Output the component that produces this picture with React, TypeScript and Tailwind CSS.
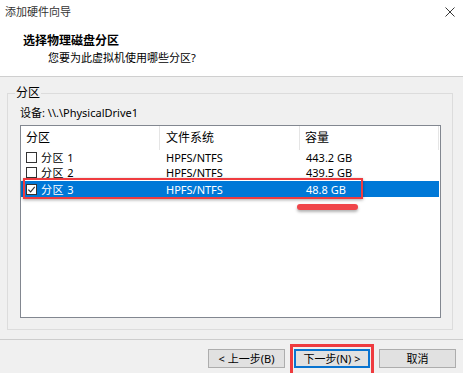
const rows = [
  { name: '分区 1', fs: 'HPFS/NTFS', size: '443.2 GB', checked: false, selected: false },
  { name: '分区 2', fs: 'HPFS/NTFS', size: '439.5 GB', checked: false, selected: false },
  { name: '分区 3', fs: 'HPFS/NTFS', size: '48.8 GB', checked: true, selected: true },
];

function Check({ checked }: { checked: boolean }) {
  return (
    <span className="w-[11px] h-[11px] border border-[#333] bg-white flex items-center justify-center shrink-0">
      {checked && (
        <svg viewBox="0 0 10 10" className="w-[9px] h-[9px]">
          <path d="M1.5 5.2 L4 7.6 L8.6 2.2" fill="none" stroke="#333" strokeWidth="1.3" />
        </svg>
      )}
    </span>
  );
}

export default function App() {
  return (
    <div className="w-[463px] h-[373px] overflow-hidden bg-[#f0f0f0] text-[12px] text-black font-['Noto_Sans','Noto_Sans_CJK_SC',sans-serif] leading-[14px]">
      {/* Header */}
      <div className="h-[77px] bg-white border-b border-[#cfcfcf]">
        <div className="flex items-center justify-between h-[24px] pl-[5px] pr-[8px]">
          <span className="text-[#333] text-[11px]">添加硬件向导</span>
          <svg viewBox="0 0 10 10" className="w-[10px] h-[10px]">
            <path d="M0.5 0.5 L9.5 9.5 M9.5 0.5 L0.5 9.5" stroke="#222" strokeWidth="0.9" />
          </svg>
        </div>
        <div className="pl-[23px] pt-[10px] font-bold text-[12px]">选择物理磁盘分区</div>
        <div className="pl-[48px] pt-[3px] text-[11px]">您要为此虚拟机使用哪些分区?</div>
      </div>

      {/* Group box */}
      <div className="relative ml-[7px] mr-[10px] mt-[16px] border border-[#dcdcdc] pt-[12px] pl-[12px] pr-[11px] pb-[11px]">
        <span className="absolute -top-[8px] left-[7px] bg-[#f0f0f0] px-[1px]">分区</span>
        <div className="h-[14px] text-[11px]">设备: \\.\PhysicalDrive1</div>
        <div className="relative mt-[5px] h-[193px] border border-[#828790] bg-white">
          <div className="flex h-[24px] items-center">
            <div className="w-[139px] h-full pl-[5px] flex items-center border-r border-[#e5e5e5]">分区</div>
            <div className="w-[140px] h-full pl-[6px] flex items-center border-r border-[#e5e5e5]">文件系统</div>
            <div className="w-[139px] h-full pl-[5px] flex items-center border-r border-[#e5e5e5]">容量</div>
          </div>
          {rows.map((r) => (
            <div
              key={r.name}
              className={
                r.selected
                  ? 'flex items-center overflow-hidden text-[11px] leading-[15px] bg-[#0078d7] text-white mr-[1px] mt-[1px] h-[16px]'
                  : 'flex h-[15px] items-center overflow-hidden text-[11px] leading-[15px]'
              }
            >
              <div className="w-[139px] h-[15px] pl-[5px] flex items-center gap-[4px]">
                <Check checked={r.checked} />
                <span className="tracking-[0.5px]">{r.name}</span>
              </div>
              <div className="w-[140px] pl-[6px]">{r.fs}</div>
              <div className="w-[139px] pl-[6px]">{r.size}</div>
            </div>
          ))}
          {/* annotations */}
          <div className="absolute left-[2px] top-[52px] w-[340px] h-[21px] border-2 border-[#ef3b3f] shadow-[0_1px_3px_rgba(0,0,0,0.35)]" />
          <div className="absolute left-[276px] top-[78px] w-[61px] h-[6px] rounded-full bg-[#f0464a] shadow-[0_2px_3px_rgba(0,0,0,0.3)]" />
        </div>
      </div>

      {/* Separator */}
      <div className="mt-[9px] h-[1px] bg-[#cdcdcd]" />

      {/* Buttons */}
      <div className="flex justify-end gap-[9px] pr-[7px] mt-[9px]">
        <button className="w-[77px] h-[19px] bg-[#e1e1e1] border border-[#adadad] text-[11px] leading-[17px]">&lt; 上一步(B)</button>
        <div className="relative">
          <button className="w-[76px] h-[19px] bg-[#e1e1e1] border-2 border-[#0a74d0] text-[11px] leading-[15px]">下一步(N) &gt;</button>
          <div className="absolute -left-[4px] -right-[4px] -top-[5px] -bottom-[8px] border-[3px] border-[#ef3b3f]" />
        </div>
        <button className="w-[77px] h-[19px] bg-[#e1e1e1] border border-[#adadad] text-[11px] leading-[17px]">取消</button>
      </div>
    </div>
  );
}
